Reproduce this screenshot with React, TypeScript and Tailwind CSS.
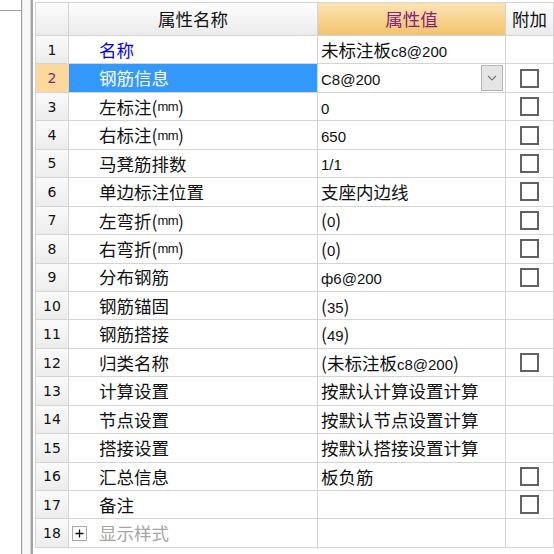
import React from "react";

interface Row {
  n: string;
  name: string;
  value: string;
  check: boolean;
  kind?: "link" | "selected" | "group";
  dropdown?: boolean;
}

const ROWS: Row[] = [
  { n: "1", name: "名称", value: "未标注板c8@200", check: false, kind: "link" },
  { n: "2", name: "钢筋信息", value: "C8@200", check: true, kind: "selected", dropdown: true },
  { n: "3", name: "左标注(mm)", value: "0", check: true },
  { n: "4", name: "右标注(mm)", value: "650", check: true },
  { n: "5", name: "马凳筋排数", value: "1/1", check: true },
  { n: "6", name: "单边标注位置", value: "支座内边线", check: true },
  { n: "7", name: "左弯折(mm)", value: "(0)", check: true },
  { n: "8", name: "右弯折(mm)", value: "(0)", check: true },
  { n: "9", name: "分布钢筋", value: "ф6@200", check: true },
  { n: "10", name: "钢筋锚固", value: "(35)", check: false },
  { n: "11", name: "钢筋搭接", value: "(49)", check: false },
  { n: "12", name: "归类名称", value: "(未标注板c8@200)", check: true },
  { n: "13", name: "计算设置", value: "按默认计算设置计算", check: false },
  { n: "14", name: "节点设置", value: "按默认节点设置计算", check: false },
  { n: "15", name: "搭接设置", value: "按默认搭接设置计算", check: false },
  { n: "16", name: "汇总信息", value: "板负筋", check: true },
  { n: "17", name: "备注", value: "", check: true },
  { n: "18", name: "显示样式", value: "", check: false, kind: "group" },
];

// split text into CJK runs and latin runs, latin gets its own font
function Mixed({ text, latin }: { text: string; latin: string }) {
  const parts = text.match(/[\u4e00-\u9fff()]+|[^\u4e00-\u9fff()]+/g) ?? [];
  return (
    <>
      {parts.map((p, i) =>
        /[\u4e00-\u9fff()]/.test(p) ? (
          <span key={i}>{p}</span>
        ) : (
          <span key={i} className={latin}>
            {p}
          </span>
        ),
      )}
    </>
  );
}

function CheckBox() {
  return <span className="block h-[19px] w-[19px] border-2 border-[#626262] bg-white" />;
}

function Dropdown() {
  return (
    <span className="mr-[2px] flex h-[26px] w-[22px] shrink-0 items-center justify-center border border-[#b4b4b4] bg-[#e5e5e5]">
      <svg width="10" height="6" viewBox="0 0 10 6">
        <path d="M1 1 L5 5 L9 1" fill="none" stroke="#777" strokeWidth="1.2" />
      </svg>
    </span>
  );
}

function PlusBox() {
  return (
    <span className="ml-[3px] mr-[12px] flex h-[15px] w-[15px] items-center justify-center border border-[#a8a8a8] bg-white">
      <svg width="9" height="9" viewBox="0 0 9 9">
        <path d="M0.5 4.5 H8.5 M4.5 0.5 V8.5" stroke="#111" strokeWidth="1.3" />
      </svg>
    </span>
  );
}

const cell = "flex items-center border-r border-b border-[#d4d4d4] h-[28.45px]";

export default function App() {
  return (
    <div className="flex h-[554px] w-[554px] overflow-hidden bg-white font-['Noto_Sans_CJK_SC',sans-serif] text-[17.5px] leading-none text-[#111]">
      {/* left pane edge */}
      <div className="w-[22px] shrink-0 border-r border-[#a0a0a0]">
        <div className="h-[11px] border-b border-[#a0a0a0]" />
      </div>
      <div className="w-[9px] shrink-0 border-l border-r border-l-[#e6e6e6] border-r-[#d0d0d0] bg-[#f8f8f8]" />
      <div className="w-[2px] shrink-0 bg-[#a3a3a3]" />
      <div className="w-[2px] shrink-0 bg-white" />

      {/* property grid */}
      <div className="flex-1 pt-[2px]">
        <div className="grid grid-cols-[34px_249px_188px_48px]">
          {/* header */}
          <div className="h-[34px] border-t border-r border-b border-l border-[#d4d4d4] bg-gradient-to-b from-[#fdfdfd] to-[#ebebeb]" />
          <div className="flex h-[34px] items-center justify-center border-t border-r border-b border-[#d4d4d4] bg-gradient-to-b from-[#fdfdfd] to-[#ebebeb]">
            属性名称
          </div>
          <div className="flex h-[34px] items-center justify-center border-t border-r border-b border-[#d4d4d4] bg-gradient-to-b from-[#fce3b3] to-[#f4c26a] text-[#7e2380]">
            属性值
          </div>
          <div className="flex h-[34px] items-center justify-center border-t border-r border-b border-[#d4d4d4] bg-gradient-to-b from-[#fdfdfd] to-[#ebebeb]">
            附加
          </div>

          {ROWS.map((r) => {
            const selected = r.kind === "selected";
            return (
              <React.Fragment key={r.n}>
                <div
                  className={`${cell} border-l justify-center font-['DejaVu_Sans',sans-serif] text-[14px] ${
                    selected
                      ? "bg-[#fcd89c] text-[#7a2a7c]"
                      : "bg-gradient-to-b from-[#fafafa] to-[#ececec] text-[#111]"
                  }`}
                >
                  {r.n}
                </div>
                <div
                  className={`${cell} ${r.kind === "group" ? "pl-0" : "pl-[30px]"} ${
                    selected
                      ? "bg-[#3399ff] text-white"
                      : r.kind === "link"
                        ? "text-[#0000ff]"
                        : r.kind === "group"
                          ? "text-[#a6a6a6]"
                          : ""
                  }`}
                >
                  {r.kind === "group" && <PlusBox />}
                  <Mixed text={r.name} latin="font-['Liberation_Sans',sans-serif] text-[13px] tracking-[-0.5px]" />
                </div>
                <div className={`${cell} pl-[3px]`}>
                  <span className="flex-1 whitespace-nowrap">
                    <Mixed text={r.value} latin="font-['Liberation_Sans',sans-serif] text-[15px]" />
                  </span>
                  {r.dropdown && <Dropdown />}
                </div>
                <div className={`${cell} justify-center`}>{r.check && <CheckBox />}</div>
              </React.Fragment>
            );
          })}
        </div>
      </div>
    </div>
  );
}
